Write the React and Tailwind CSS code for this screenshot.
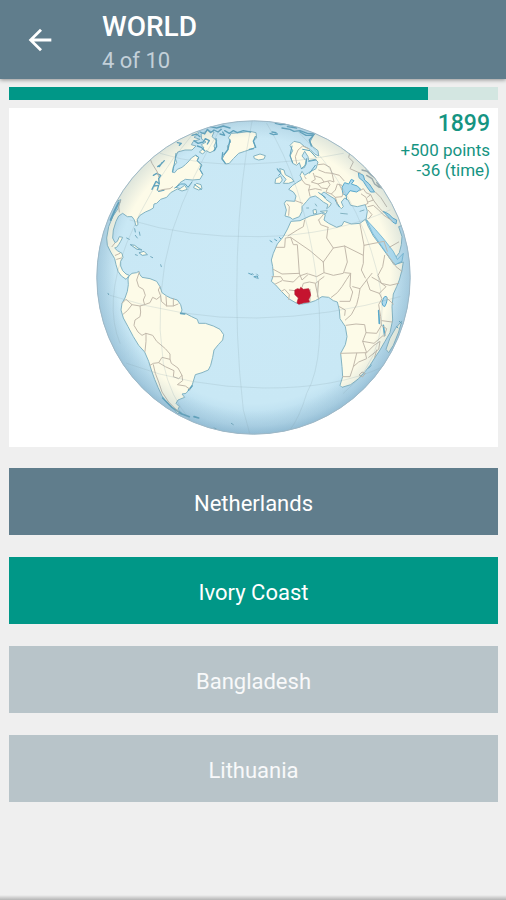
import { MdArrowBack } from "react-icons/md";

const answers = [
  { label: "Netherlands", state: "picked" },
  { label: "Ivory Coast", state: "correct" },
  { label: "Bangladesh", state: "idle" },
  { label: "Lithuania", state: "idle" },
];

const answerStyles = {
  picked: "bg-[#607d8c] text-white",
  correct: "bg-[#009787] text-white",
  idle: "bg-[#b8c4c9] text-white/90",
};

const timeLeft = 85.7;

function Globe() {
  return (
    <svg
      viewBox="18 30 945 945"
      className="w-[315px] max-w-full"
      role="img"
      aria-label="Globe"
    >
      <defs>
        <clipPath id="disc">
          <circle cx="490.5" cy="502.5" r="471" />
        </clipPath>
        <radialGradient id="sea" cx="0.5" cy="0.46" r="0.55">
          <stop offset="0" stopColor="#cbe9f6" />
          <stop offset="0.8" stopColor="#c9e8f5" />
          <stop offset="0.93" stopColor="#b4d9ec" />
          <stop offset="1" stopColor="#98c4de" />
        </radialGradient>
        <radialGradient id="shade" cx="0.5" cy="0.49" r="0.51">
          <stop offset="0.85" stopColor="#6b95ae" stopOpacity="0" />
          <stop offset="1" stopColor="#6b95ae" stopOpacity="0.28" />
        </radialGradient>
      </defs>

      <g clipPath="url(#disc)" strokeLinejoin="round" strokeLinecap="round">
        <circle cx="490.5" cy="502.5" r="472" fill="url(#sea)" />

        {/* land, western half */}
        <g fill="#fdfbe8" stroke="#83b3c2" strokeWidth="3">
          <path d="M40 290L90 220 170 120 250 60 305 40 326 70 312 82 330 88 310 94 304 104 318 108 306 120 285 120 263 126 256 145 260 158 250 170 247 186 254 188 262 178 276 172 286 164 298 152 304 144 316 136 326 142 321 152 336 166 329 178 338 194 330 208 308 210 286 208 270 218 258 232 270 236 284 226 292 238 276 243 262 237 242 248 230 262 212 268 200 280 192 282 190 294 180 300 166 306 150 316 142 328 144 344 138 348 133 330 126 320 112 320 98 310 86 318 78 334 70 360 68 384 75 398 82 394 88 380 98 382 92 394 86 404 80 412 74 414 82 422 96 430 99 442 92 454 92 468 98 482 108 492 118 496 108 508 94 498 84 484 78 464 74 446 62 426 52 406 50 384 56 350 68 320 84 296 92 270z" />
          <path d="M118 497L126 490 140 488 146 484 150 494 156 502 180 506 200 514 210 530 216 548 230 558 242 564 262 570 272 584 276 600 272 610 286 610 305 620 322 628 326 640 346 640 370 648 390 658 401 674 398 690 385 704 372 720 368 742 362 766 355 780 336 788 316 794 310 814 305 830 296 840 288 850 276 852 284 862 264 870 258 880 268 890 264 898 276 912 262 910 250 896 232 880 216 858 204 832 194 808 184 780 176 754 164 726 146 706 130 680 114 650 100 624 93 600 96 580 105 564 112 544 115 524 114 508z" />
          <path d="M425 70L450 68 480 64 498 68 500 84 490 92 496 112 482 118 464 124 446 130 430 146 418 160 407 162 396 148 404 132 414 120 412 108 422 96 416 84z" />
          <path d="M334 72L352 62 372 66 366 80 380 92 372 108 376 120 360 128 348 122 338 132 328 126 342 114 334 104 348 96 336 88z" />
          <path d="M314 226L320 220 333 224 336 236 326 240 312 234z" />
        </g>

        {/* lakes, straits and small islands */}
        <g fill="none" stroke="#5fa3bd" strokeWidth="4">
          <path d="M203 170L212 164 223 152M216 158L208 170" />
          <path d="M190 196L200 190 212 196 206 206 208 222 198 214 186 238M192 228L206 226 202 240M206 244L222 240M262 98L274 100 268 106" />
          <path d="M330 66L344 72 352 58 362 68 372 60 384 66 394 58M312 92L324 100 340 96 346 86 358 92 352 102M378 86L380 110 372 122M390 72L404 76 398 66M404 62L418 70 430 62 442 68 460 62 482 66M306 76L320 72 330 80M322 108L334 112 344 122M360 50L380 54 400 48 420 54" />
          <path d="M420 90L414 118 402 134M398 128L396 146 406 160M496 80L490 94 497 112M478 118L490 116" />
          <path d="M258 130L256 146 250 176 248 186M318 136L326 142 322 152 334 164 330 178 338 192M254 234L272 222 286 222 294 232 306 216M314 224L334 238" strokeWidth="3" />
          <path d="M62 330L74 302 86 278" strokeWidth="6" />
          <path d="M218 864L246 892 276 912 298 920M312 920L326 924" strokeWidth="5" />
          <path d="M296 840L306 828M272 610L284 612" strokeWidth="5" />
        </g>
        <g fill="#fdfbe8" stroke="#75abbf" strokeWidth="3">
          <path d="M122 404L134 406 144 414 156 420 142 418z" />
          <path d="M148 428L162 424 172 434 158 436zM182 440L188 443M136 434L142 436M212 464L214 470" />
          <path d="M134 356L136 366M148 366L150 376M136 376L142 384M110 384L118 388" />
          <path d="M486 490L490 494M500 492L504 496M494 502L500 504M54 550L56 554M424 940L430 944M372 954L378 956" />
        </g>

        {/* borders, western half */}
        <g fill="none" stroke="#c2b9ab" strokeWidth="3">
          <path d="M176 136L186 160 202 186 206 200M206 242L222 238 240 236 248 230M88 306L86 288 92 272M66 410L74 400M76 436L90 430M80 448L94 444" />
          <path d="M148 486L140 510 146 530 160 538 166 556 160 570 164 584 150 588 152 606 150 620 135 630 132 646 144 666 156 676 168 670 168 694 165 724" />
          <path d="M164 584L180 578 188 562 200 568 212 558 205 540 210 530M212 558L214 574 230 588 228 560M230 588L250 588 250 566M250 588L264 582M96 580L108 568 126 584 112 602 100 612M126 584L150 588" />
          <path d="M168 670L188 676 200 694 226 716 240 732 240 748 216 742 206 758 190 760 180 766M206 758L226 770 252 782 250 800 266 806 276 796 264 774 244 760 240 748M276 796L278 812 262 824 286 828 300 838M190 764L196 790 206 816 216 846 236 876 264 904" />
        </g>

        {/* land, eastern half */}
        <g transform="translate(480 0)">
          <g fill="#fdfbe8" stroke="#83b3c2" strokeWidth="3">
            <path d="M205 60L188 80 180 96 188 110 204 122 206 138 194 132 180 118 164 110 150 98 132 94 120 106 128 122 120 138 128 160 140 166 148 158 154 176 164 172 168 152 156 138 164 124 174 140 176 152 196 148 204 156 198 176 176 188 164 196 156 184 150 196 156 208 140 218 128 226 116 238 130 246 138 258 134 274 108 272 103 280 109 300 105 318 120 322 128 328 148 320 156 304 156 290 170 274 180 262 196 258 208 266 220 276 234 284 230 296 240 288 244 280 228 268 214 252 222 246 240 258 256 268 262 284 274 296 280 290 274 276 284 264 294 270 302 286 322 290 346 284 352 304 348 328 366 352 384 382 408 416 432 448 448 428 454 404 456 380 446 350 500 330 500 200 380 60z" />
            <path d="M124 334L150 332 180 318 214 310 226 314 222 330 236 340 260 352 276 346 282 334 304 342 330 340 346 328 354 348 370 378 388 402 404 424 420 446 432 464 460 456 456 480 448 510 440 530 430 552 426 590 428 630 420 668 405 694 390 720 374 744 360 766 346 784 326 806 302 824 276 832 270 826 278 800 276 770 272 730 286 704 291 680 286 650 270 626 268 600 262 576 250 572 236 562 216 560 196 572 178 578 156 582 140 580 116 566 94 544 76 524 64 514 70 496 68 470 64 450 70 430 82 402 100 380 112 358z" />
            <path d="M455 634L446 666 430 706 416 728 408 718 420 684 436 656z" />
            <path d="M90 176L102 180 106 194 124 204 132 214 116 220 100 220 108 208 94 192z" />
            <path d="M78 206L92 198 97 210 90 220 76 220z" />
            <path d="M12 138L30 132 46 137 42 147 26 150 14 146z" />
            <path d="M190 300L198 298 200 310 192 312zM196 282L200 288M212 304L232 302 228 310zM272 310L292 312M330 304L342 300M170 294L176 294M82 178L86 184" />
          </g>

          {/* inland seas */}
          <g fill="#addaee" stroke="#5aa9cb" strokeWidth="3">
            <path d="M278 250L276 232 284 218 296 222 304 208 312 212 304 222 322 228 332 238 320 246 300 242 290 256z" />
            <path d="M326 188L340 196 344 210 358 222 374 246 362 246 350 230 340 214 328 204z" />
            <path d="M400 304L416 312 428 324 440 330 438 342 428 336 414 320z" />
            <path d="M350 330L376 358 402 388 430 424 442 448 460 430 456 454 436 464 420 446 396 410 368 370z" strokeWidth="2" />
            <path d="M402 562q8-8 10 4q-2 16-8 24q-8-2-8-12z" />
            <path d="M386 602L388 640M400 646L404 676" fill="none" strokeWidth="5" />
          </g>
          <g fill="none" stroke="#5fa3bd" strokeWidth="4">
            <path d="M60 70L70 74 82 72M66 66L78 68M76 40L92 44 108 42 130 48M96 54L120 58 132 64 150 62 172 70 192 72M112 50L140 54M150 66L168 76 190 76 178 90 184 108" />
            <path d="M126 108L120 136 128 158M158 118L180 122 198 142M82 176L92 190 86 196M196 166L178 190M154 176L168 164 170 146M176 154L198 150M206 248L226 262M288 256L290 268M256 270L268 290" strokeWidth="3" />
            <path d="M60 392L66 396M74 388L80 392M88 382L92 386M-4 490L6 494M12 500L22 498 24 506" strokeWidth="3" />
            <path d="M448 634L454 640M440 650L444 654M364 766L356 774" strokeWidth="3" />
          </g>

          {/* borders, Europe and Asia */}
          <g fill="none" stroke="#c2b9ab" strokeWidth="3">
            <path d="M140 160L136 140 144 120 158 108 176 116M112 282L118 290 116 316M136 272L158 280M156 210L166 222 180 226 176 240 180 258M164 200L168 206M176 240L196 236 214 240M190 190L196 208 184 216 204 222 222 216 214 204 196 198M204 164L222 162 240 172 246 190 226 188 206 180M246 190L268 196 282 212M222 216L240 212 252 216 246 190M204 222L214 234 232 236 240 224 234 214M232 236L228 246 244 252 256 240 262 222 276 226M244 252L256 262 276 260 280 246M256 262L262 280M268 224L276 240" />
            <path d="M284 120L300 126 296 142 310 156 300 176 318 184 332 190M330 242L340 236 348 248 362 254 352 262M334 252L348 262 354 280 346 284M354 276L370 270 362 254M370 270L388 294 400 306M354 290L370 286 386 300 402 316 426 332M354 300L366 314 356 326M418 412L446 396M318 120L340 140 356 160 372 186 396 210 412 240M346 180L366 198 386 212 396 232M376 246L392 262 410 290" />
            <path d="M336 180L352 184 364 196 380 204M350 196L366 206 374 222 388 232M356 182L372 190M380 218L394 234" strokeWidth="4" stroke="#a3adab" />
          </g>

          {/* borders, Africa */}
          <g fill="none" stroke="#c2b9ab" strokeWidth="3">
            <path d="M164 330L160 350 142 360 114 378M78 412L104 412 106 384 122 382 130 404 142 404 148 490 96 492 70 478M122 382L180 422 220 456M206 330L212 344 234 352M206 330L220 314M234 352L230 384 250 414 220 456M250 414L284 408 340 436M330 342L342 406 402 394M342 406L340 436 340 460 334 480 346 504M284 408L292 456 280 490 250 496 222 488 220 456M148 490L156 510 176 492 200 500 222 488M404 436L398 470 384 496 394 520M410 430L438 470 456 484M394 520L420 526 446 520M402 394L412 424" />
            <path d="M66 500L92 500 100 512 130 516 148 498 172 490M76 522L88 516 96 512M94 544L104 538 118 554 116 568M118 540L134 542M156 532L160 520 178 516 198 520 206 512 222 500M180 538L180 576M196 522L206 568M206 514L202 560M244 562L262 548 276 530 290 508 302 490 284 488M302 490L300 530 308 546 300 574 270 574M308 530L330 536 350 510 366 490M350 510L360 540 388 550 408 530 384 512 366 502M330 536L326 560 320 584 304 614 286 630M268 590L286 600 284 616M388 550L396 566 386 584 392 620 394 646 380 670 348 668 344 644 318 642 288 646M348 668L338 694 350 728 272 730M338 694L372 700 400 676M350 728L372 706 390 694 386 718 356 742M320 730L310 770 326 756 350 746 346 730M310 770L300 800 278 800M410 564L430 582M396 632L426 636M394 646L410 656 402 680M380 720L374 742M328 794L336 786 346 790 338 800z" />
          </g>

          <path
            d="M135 540L142 536 150 538 152 532 160 538 176 536 180 546 182 556 176 568 178 576 162 578 146 583 141 578 145 564 135 554z"
            fill="#c5142f"
            stroke="#b01a34"
            strokeWidth="2"
          />
        </g>

        {/* graticule */}
        <g fill="none" stroke="#8fa9b0" strokeOpacity="0.28" strokeWidth="2.5">
          <path d="M120 330Q290 384 510 380T900 300" />
          <path d="M60 556Q280 628 500 624T930 560" />
          <path d="M110 760Q300 832 520 834T880 770" />
          <path d="M210 130Q330 168 480 162T760 130" />
          <path d="M400 42Q300 200 248 360Q190 560 220 760Q240 860 300 930" />
          <path d="M486 34Q450 200 442 440T460 900L480 974" />
          <path d="M530 40Q640 220 676 480T650 850Q630 920 600 960" />
          <path d="M620 60Q800 240 860 480T760 850" />
          <path d="M310 70Q180 220 110 400T90 700" />
        </g>
        <circle cx="490.5" cy="502.5" r="472" fill="url(#shade)" />
      </g>
      <circle
        cx="490.5"
        cy="502.5"
        r="470"
        fill="none"
        stroke="#9fb8c6"
        strokeWidth="3"
      />
    </svg>
  );
}

export default function App() {
  return (
    <div className="flex min-h-screen flex-col bg-[#efefef] font-[Roboto,sans-serif]">
      <header className="relative flex h-[79px] items-center bg-[#607d8c] pl-[23px] shadow-[0_1px_4px_rgba(0,0,0,0.4)]">
        <button type="button" aria-label="Back" className="text-white">
          <MdArrowBack size={34} />
        </button>
        <div className="ml-[45px] pt-2">
          <h1 className="text-[28px] leading-[34px] font-medium text-white">
            WORLD
          </h1>
          <p className="text-[22px] leading-[34px] text-[#c3d0d9]">4 of 10</p>
        </div>
      </header>

      <main className="flex flex-1 flex-col pt-2 pr-2 pl-[9px]">
        <div
          role="progressbar"
          aria-label="Time left"
          aria-valuenow={timeLeft}
          className="h-[13px] bg-[#d3e6e1]"
        >
          <div
            className="h-full bg-[#009787]"
            style={{ width: `${timeLeft}%` }}
          />
        </div>

        <section className="relative mt-2 flex justify-center bg-white py-3">
          <Globe />
          <div className="absolute top-0 right-2 text-right text-[#159482]">
            <p className="text-[23px] leading-8 font-medium">1899</p>
            <p className="text-[17px] leading-5">+500 points</p>
            <p className="text-[17px] leading-5">-36 (time)</p>
          </div>
        </section>

        <div className="mt-[21px] flex flex-col gap-[22px]">
          {answers.map(({ label, state }) => (
            <button
              key={label}
              type="button"
              className={`h-[67px] w-full pt-1 text-[22px] ${answerStyles[state]}`}
            >
              {label}
            </button>
          ))}
        </div>
      </main>

      <div className="h-[5px] bg-linear-to-b from-[#efefef] to-[#b4b4b4]" />
    </div>
  );
}
